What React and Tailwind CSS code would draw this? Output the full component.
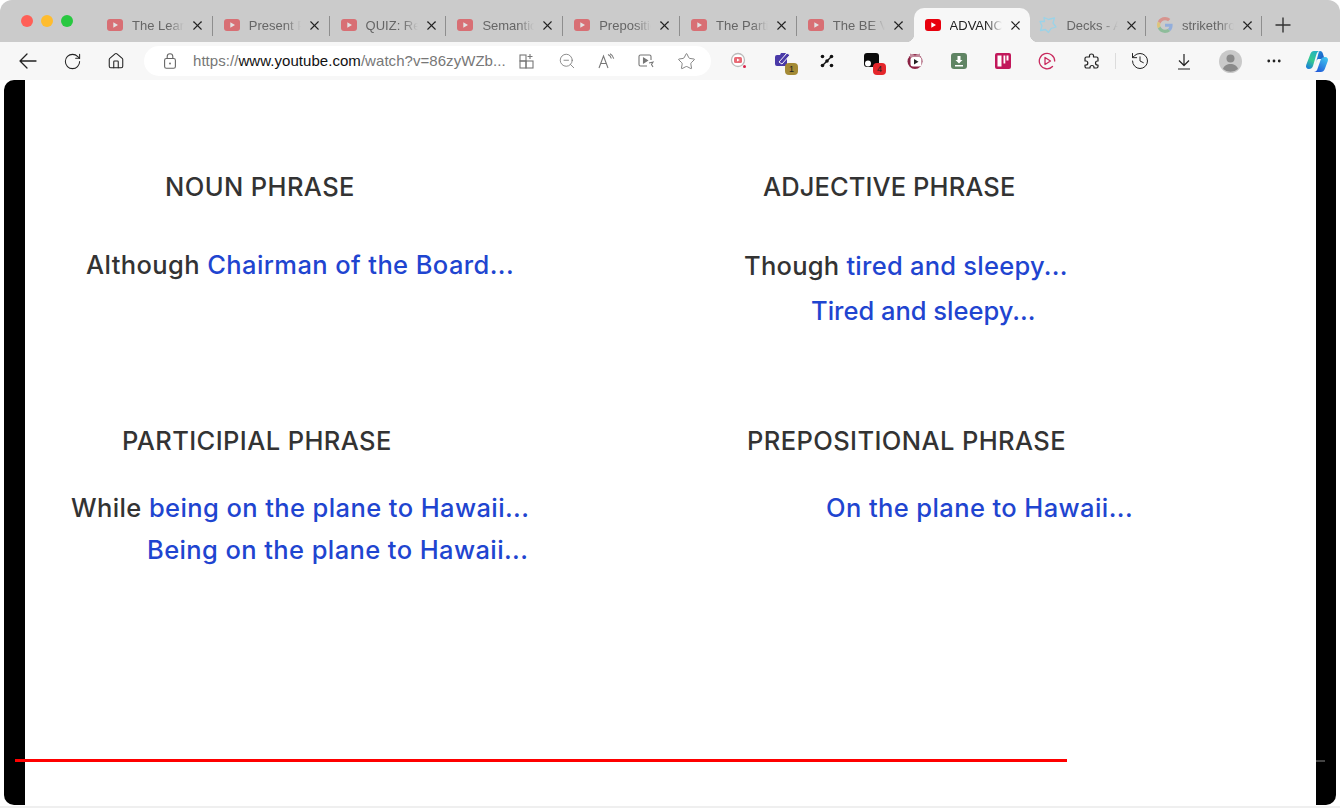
import React from "react";
import { RotateCw, Home, X, ZoomOut, Star, History, MoreHorizontal } from "lucide-react";

const YT = ({ dim }) => (
  <svg width="16" height="12" viewBox="0 0 16 12" className={dim ? "shrink-0 opacity-45" : "shrink-0"}>
    <rect width="16" height="12" rx="3" fill="#e8000d" />
    <path d="M6.3 3.2 L11 6 L6.3 8.8 Z" fill="#fff" />
  </svg>
);

const DecksIcon = () => (
  <svg width="18" height="18" viewBox="0 0 18 18" className="shrink-0 -ml-[2px]" fill="none" stroke="#9bd3e8" strokeWidth="1.3" strokeLinejoin="round">
    <path d="M5 1.5 L9.5 3.5 L15.5 1.8 L14 7 L17 11 L12 12.5 L9.5 16.5 L6.5 13.5 L1.5 14.5 L3 10 L1 5.5 L5.5 5.5 Z" />
  </svg>
);

const GoogleIcon = () => (
  <svg width="16" height="16" viewBox="0 0 48 48" className="shrink-0 opacity-40">
    <path fill="#EA4335" d="M24 9.5c3.5 0 6.700 1.300 9.200 3.600l6.800-6.800C35.900 2.400 30.500 0 24 0 14.600 0 6.500 5.400 2.600 13.200l8 6.200C12.400 13.700 17.700 9.500 24 9.500z" />
    <path fill="#4285F4" d="M46.900 24.500c0-1.600-.1-3.100-.4-4.500H24v9h12.900c-.6 3-2.200 5.500-4.800 7.200l7.700 6c4.500-4.200 7.100-10.300 7.100-17.700z" />
    <path fill="#FBBC05" d="M10.500 28.600c-.5-1.500-.8-3-.8-4.600s.3-3.100.8-4.600l-8-6.200C.9 16.500 0 20.100 0 24s.9 7.500 2.600 10.800l7.900-6.200z" />
    <path fill="#34A853" d="M24 48c6.500 0 11.900-2.100 15.900-5.800l-7.700-6c-2.200 1.400-4.900 2.300-8.200 2.300-6.300 0-11.600-4.200-13.500-9.900l-7.900 6.200C6.500 42.600 14.600 48 24 48z" />
  </svg>
);

const tabs = [
  { t: "The Learn", i: "yt" },
  { t: "Present Pe", i: "yt" },
  { t: "QUIZ: Red", i: "yt" },
  { t: "Semantic", i: "yt" },
  { t: "Prepositio", i: "yt" },
  { t: "The Partic", i: "yt" },
  { t: "The BE Ve", i: "yt" },
  { t: "ADVANCE", i: "yt", active: true },
  { t: "Decks - A", i: "decks", narrow: true },
  { t: "strikethrou", i: "g", narrow: true },
];

function Tab({ t, i, active, hideSep, narrow }) {
  return (
    <div className={`relative flex h-[34px] shrink-0 items-center pl-[11px] ${narrow ? "w-[115.6px]" : "w-[116.8px]"} ${active ? "rounded-t-[10px] bg-[#f7f7f7]" : ""}`}>
      {active && (
        <>
          <span className="absolute bottom-0 -left-[8px] h-[8px] w-[8px] bg-[radial-gradient(circle_at_0_0,#cbcbcb_8px,#f7f7f7_8.5px)]" />
          <span className="absolute bottom-0 -right-[8px] h-[8px] w-[8px] bg-[radial-gradient(circle_at_100%_0,#cbcbcb_8px,#f7f7f7_8.5px)]" />
        </>
      )}
      {i === "yt" && <YT dim={!active} />}
      {i === "decks" && <DecksIcon />}
      {i === "g" && <GoogleIcon />}
      <span
        className={`ml-[9px] mt-px h-[16px] w-[52px] overflow-hidden whitespace-nowrap text-[13px] leading-[16px] [mask-image:linear-gradient(to_right,#000_70%,transparent_100%)] ${active ? "text-[#222]" : "text-[#666]"}`}
      >
        {t}
      </span>
      <X size={15} strokeWidth={1.7} color="#222" className="ml-[6px] mt-px shrink-0" />
      {!active && !hideSep && <span className="absolute right-0 top-[8px] h-[20px] w-px bg-[#8e8e8e]" />}
    </div>
  );
}

const Box = ({ children, className = "" }) => (
  <div className={`relative flex h-[38px] w-[44px] shrink-0 items-center justify-center ${className}`}>{children}</div>
);

const Badge = ({ n, c }) => (
  <span className={`absolute left-[24px] top-[21px] flex h-[12px] w-[13px] items-center justify-center rounded-[4px] text-[9px] leading-none text-[#222] ${c}`}>{n}</span>
);

const Line = ({ cls, children }) => (
  <div className={`flex h-[36px] items-center whitespace-nowrap text-[25.5px] font-medium text-[#333] ${cls}`}>{children}</div>
);
const Blue = ({ children }) => <span className="whitespace-pre text-[#1f45d0]">{children}</span>;
const Heading = ({ cls, children }) => (
  <div className={`flex h-[32px] items-center whitespace-nowrap text-[25.5px] font-medium text-[#333] ${cls}`}>{children}</div>
);

export default function App() {
  return (
    <div className="flex h-[810px] w-[1340px] flex-col overflow-hidden bg-white font-['Liberation_Sans',sans-serif]">
      {/* tab strip */}
      <div className="flex h-[42px] shrink-0 items-end rounded-t-[12px] bg-[#cbcbcb]">
        <div className="flex h-[42px] w-[96px] shrink-0 items-center gap-[8px] pl-[21px]">
          <span className="h-[12px] w-[12px] rounded-full bg-[#ff5f57]" />
          <span className="h-[12px] w-[12px] rounded-full bg-[#febc2e]" />
          <span className="h-[12px] w-[12px] rounded-full bg-[#28c840]" />
        </div>
        {tabs.map((tab, idx) => (
          <Tab key={idx} {...tab} hideSep={idx === 6} />
        ))}
        <div className="-ml-px flex h-[34px] w-[44px] items-center justify-center">
          <svg width="16" height="16" viewBox="0 0 16 16" stroke="#333" strokeWidth="1.4"><path d="M8 0.500v15M0.500 8h15" /></svg>
        </div>
      </div>

      {/* toolbar */}
      <div className="flex h-[38px] shrink-0 items-center bg-[#f7f7f7] pl-[6px]">
        <Box>
          <svg width="18" height="16" viewBox="0 0 18 16" fill="none" stroke="#222" strokeWidth="1.300" strokeLinecap="round" strokeLinejoin="round">
            <path d="M1 8h16M8 1L1 8l7 7" />
          </svg>
        </Box>
        <Box><RotateCw size={19} strokeWidth={1.3} color="#222" /></Box>
        <Box><Home size={18} strokeWidth={1.4} color="#222" /></Box>
        <div className="ml-[6px] flex h-[30px] w-[567px] shrink-0 items-center rounded-full bg-white">
          <svg width="12" height="16" viewBox="0 0 12 16" fill="none" stroke="#666" strokeWidth="1.100" className="ml-[20px] shrink-0">
            <rect x="0.600" y="5.500" width="10.800" height="9.800" rx="1.800" />
            <path d="M3.200 5.500V3.500a2.800 2.800 0 0 1 5.600 0v2" />
            <circle cx="6" cy="10.500" r="0.900" fill="#666" stroke="none" />
          </svg>
          <span className="ml-[17px] w-[314px] whitespace-nowrap text-[15px] tracking-[0.05px] text-[#777]">
            https://<span className="text-[#111]">www.youtube.com</span>/watch?v=86zyWZb...
          </span>
          <svg width="16" height="16" viewBox="0 0 16 16" fill="none" stroke="#777" strokeWidth="1.100" className="ml-[12px] shrink-0">
            <rect x="1" y="2" width="6" height="6" /><rect x="1" y="8" width="6" height="7" /><rect x="7" y="8" width="7" height="7" />
            <path d="M11 1v5M8.500 3.500h5" />
          </svg>
          <ZoomOut size={18} strokeWidth={1.1} color="#777" className="ml-[23px] shrink-0" />
          <svg width="17" height="16" viewBox="0 0 17 16" fill="none" stroke="#777" strokeWidth="1.100" className="ml-[22px] shrink-0">
            <path d="M1 15 L5.500 3 L10 15 M2.800 10.500h5.500" />
            <path d="M10 1.500c2 .8 3 2.200 3.300 4M12 .8c2 1 3.300 2.700 3.700 4.800" />
          </svg>
          <svg width="17" height="16" viewBox="0 0 17 16" fill="none" stroke="#777" strokeWidth="1.100" className="ml-[23px] shrink-0">
            <path d="M9 13H2.500A1.500 1.500 0 0 1 1 11.500v-8A1.500 1.500 0 0 1 2.500 2h9A1.500 1.500 0 0 1 13 3.500V7" />
            <path d="M5.500 5v5l4-2.500z" fill="#777" /><path d="M11 10l4-1-1.500 2.500L15 14" />
          </svg>
          <Star size={19} strokeWidth={1} color="#666" className="ml-[22px] shrink-0" />
        </div>
        <div className="ml-[6px] flex">
          <Box>
            <svg width="18" height="18" viewBox="0 0 18 18">
              <circle cx="8" cy="8" r="6.500" fill="#fff" stroke="#bbb" strokeWidth="1.300" />
              <rect x="4" y="5" width="8" height="6" rx="1.500" fill="#e86a75" />
              <path d="M7 6.500l2.800 1.500L7 9.500z" fill="#fff" />
              <circle cx="14.500" cy="14.500" r="1.500" fill="#d8234a" />
            </svg>
          </Box>
          <Box>
            <svg width="18" height="18" viewBox="0 0 18 18" className="-mt-[3px]">
              <path d="M1 6a2 2 0 0 1 2-2h3l1-2h5l-2 4h3v9H3a2 2 0 0 1-2-2z" fill="#4a3aa8" />
              <path d="M5 11L13 2l3 2-8 9z" fill="#4a3aa8" stroke="#f7f7f7" strokeWidth="1" />
            </svg>
            <Badge n="1" c="bg-[#a48a35]" />
          </Box>
          <Box>
            <svg width="14" height="14" viewBox="0 0 14 14">
              <path d="M3 11L11 3" stroke="#111" strokeWidth="1.500" />
              <circle cx="2.500" cy="2.500" r="1.800" fill="#111" /><circle cx="11.500" cy="2.500" r="1.800" fill="#111" />
              <circle cx="2.500" cy="11.500" r="1.800" fill="#111" /><circle cx="11.500" cy="11.500" r="1.800" fill="#111" />
              <circle cx="7" cy="7" r="1.800" fill="#111" />
            </svg>
          </Box>
          <Box>
            <svg width="15" height="14" viewBox="0 0 15 14" className="-mt-[2px]">
              <rect width="15" height="14" rx="3" fill="#0b0b0b" />
              <circle cx="4" cy="10.500" r="3" fill="#fff" />
            </svg>
            <Badge n="4" c="bg-[#e5262b]" />
          </Box>
          <Box>
            <svg width="18" height="18" viewBox="0 0 18 18">
              <circle cx="9" cy="9.500" r="7.500" fill="#8c2344" />
              <path d="M4 1.500l5 2 5-2v4H4z" fill="#c28a9c" />
              <rect x="4.500" y="5" width="11" height="9.500" rx="2.500" fill="#fff" />
              <path d="M8 7l4.500 2.700L8 12.400z" fill="#222" />
            </svg>
          </Box>
          <Box>
            <svg width="16" height="16" viewBox="0 0 16 16">
              <rect width="16" height="16" rx="3" fill="#5f8463" />
              <path d="M6.500 3h3v4h2L8 10.500 4.500 7h2z M4 12h8v1.500H4z" fill="#fff" />
            </svg>
          </Box>
          <Box>
            <svg width="16" height="16" viewBox="0 0 16 16">
              <rect width="16" height="16" rx="2" fill="#c2185b" />
              <rect x="2.500" y="2.500" width="4" height="11" fill="#fff" />
              <rect x="8.500" y="2.500" width="1.800" height="8" fill="#fff" />
              <rect x="11.500" y="2.500" width="2" height="5" fill="#fff" />
            </svg>
          </Box>
          <Box>
            <svg width="18" height="18" viewBox="0 0 18 18" fill="none">
              <path d="M14.500 14.500A7.700 7.700 0 1 1 16.700 9" stroke="#c92a5e" strokeWidth="1.300" strokeLinecap="round" />
              <path d="M7 5.500l5.500 3.500L7 12.500z" stroke="#c92a5e" strokeWidth="1.300" strokeLinejoin="round" />
            </svg>
          </Box>
          <Box>
            <svg width="17" height="17" viewBox="0 0 17 17" fill="none" stroke="#222" strokeWidth="1.200" strokeLinejoin="round">
              <path d="M6.500 2.500c0-1 1-1.500 2-1.500s2 .5 2 1.500V4h3c.8 0 1.500.7 1.500 1.500V8h-.5c-1 0-2 .8-2 2s1 2 2 2h.5v1.500c0 .8-.7 1.500-1.500 1.500H11v-.5c0-1-.8-2-2-2s-2 1-2 2v.5H3.500C2.700 15 2 14.300 2 13.500V12h1c1 0 1.800-.8 1.800-2S4 8 3 8H2V5.500C2 4.700 2.700 4 3.500 4h3z" />
            </svg>
          </Box>
        </div>
        <span className="ml-[2px] h-[16px] w-px bg-[#dcdcdc]" />
        <div className="ml-[2px] flex">
          <Box><History size={20} strokeWidth={1.2} color="#222" /></Box>
          <Box>
            <svg width="14" height="17" viewBox="0 0 14 17" fill="none" stroke="#222" strokeWidth="1.200" strokeLinejoin="round">
              <path d="M7 1v11.500M2 7.500l5 5 5-5M1 16h12" />
            </svg>
          </Box>
        </div>
        <div className="ml-[2px] flex">
          <Box>
            <svg width="23" height="23" viewBox="0 0 23 23">
              <circle cx="11.500" cy="11.500" r="11.500" fill="#c9c9c9" />
              <circle cx="11.500" cy="8.500" r="4" fill="#8a8a8a" />
              <path d="M4 19c1-3.500 4-5 7.500-5s6.500 1.500 7.500 5a11.500 11.500 0 0 1-15 0z" fill="#8a8a8a" />
            </svg>
          </Box>
          <Box className="-mr-[2px]"><MoreHorizontal size={18} strokeWidth={1.700} color="#222" /></Box>
          <Box className="-mr-[2px]">
            <svg width="24" height="24" viewBox="0 0 24 24" className="ml-[2px]">
              <defs>
                <linearGradient id="cpA" x1="0.800" y1="0" x2="0.200" y2="1"><stop offset="0" stopColor="#1fb0c8" /><stop offset="0.550" stopColor="#35c98f" /><stop offset="1" stopColor="#1a7fd8" /></linearGradient>
                <linearGradient id="cpB" x1="0" y1="0" x2="1" y2="1"><stop offset="0" stopColor="#1e9be0" /><stop offset="1" stopColor="#1b3fb8" /></linearGradient>
                <linearGradient id="cpC" x1="0.800" y1="0" x2="0.200" y2="1"><stop offset="0" stopColor="#3ec4ef" /><stop offset="1" stopColor="#2158d8" /></linearGradient>
              </defs>
              <path d="M15 2c1.500 0 2.500 1 3 3l1.500 5H14c-1.500 0-2 .5-2.500 2l-1.500 5 3-11c.5-2 1-4 2-4z" fill="url(#cpB)" />
              <path d="M9 2h6c-2 0-3 1.500-3.800 4L8 17c-.7 2-2 3-4 3-2.500 0-3.500-2-2.800-4L5 6c.8-2.500 2-4 4-4z" fill="url(#cpA)" />
              <path d="M20 8c2.500 0 3.500 2 2.800 4l-3 8c-.8 2-2 3-4 3h-7c2 0 3.300-1.500 3.800-3.500l3-8.500c.7-2 2-3 4.400-3z" fill="url(#cpC)" />
            </svg>
          </Box>
        </div>
      </div>

      {/* video panel */}
      <div className="relative mx-[4px] flex h-[725px] shrink-0 rounded-[10px] bg-black px-[21px]">
        <div className="grid h-full w-[1291px] grid-cols-[615px_676px] grid-rows-[345px_380px] bg-white font-['Inter',sans-serif]">
          <div className="pt-[91px]">
            <Heading cls="ml-[140px] tracking-[0.4px]">NOUN PHRASE</Heading>
            <Line cls="ml-[61px] mt-[44px] tracking-[0.4px]">Although&nbsp;<Blue>Chairman of the Board...</Blue></Line>
          </div>
          <div className="pt-[91px]">
            <Heading cls="ml-[123px] tracking-[0.1px]">ADJECTIVE PHRASE</Heading>
            <Line cls="ml-[104px] mt-[45px] tracking-[0.25px]">Though&nbsp;<Blue>tired and sleepy...</Blue></Line>
            <Line cls="ml-[171px] mt-[9px]"><Blue>Tired and sleepy...</Blue></Line>
          </div>
          <div>
            <Heading cls="ml-[97px] tracking-[0.4px]">PARTICIPIAL PHRASE</Heading>
            <Line cls="ml-[46px] mt-[33px] tracking-[0.4px]">While&nbsp;<Blue>being on the plane to Hawaii...</Blue></Line>
            <Line cls="ml-[122px] mt-[6px] tracking-[0.4px]"><Blue>Being on the plane to Hawaii...</Blue></Line>
          </div>
          <div>
            <Heading cls="ml-[107px] tracking-[0.4px]">PREPOSITIONAL PHRASE</Heading>
            <Line cls="ml-[186px] mt-[33px] tracking-[0.4px]"><Blue>On the plane to Hawaii...</Blue></Line>
          </div>
        </div>
        {/* progress overlay */}
        <span className="absolute left-[11px] top-[679px] h-[3px] w-[1052px] bg-[#f00]" />
        <span className="absolute left-[1312px] top-[680px] h-[2px] w-[9px] bg-[#444]" />
      </div>
      <div className="mt-px h-[2px] shrink-0 bg-[#efefef]" />
    </div>
  );
}
